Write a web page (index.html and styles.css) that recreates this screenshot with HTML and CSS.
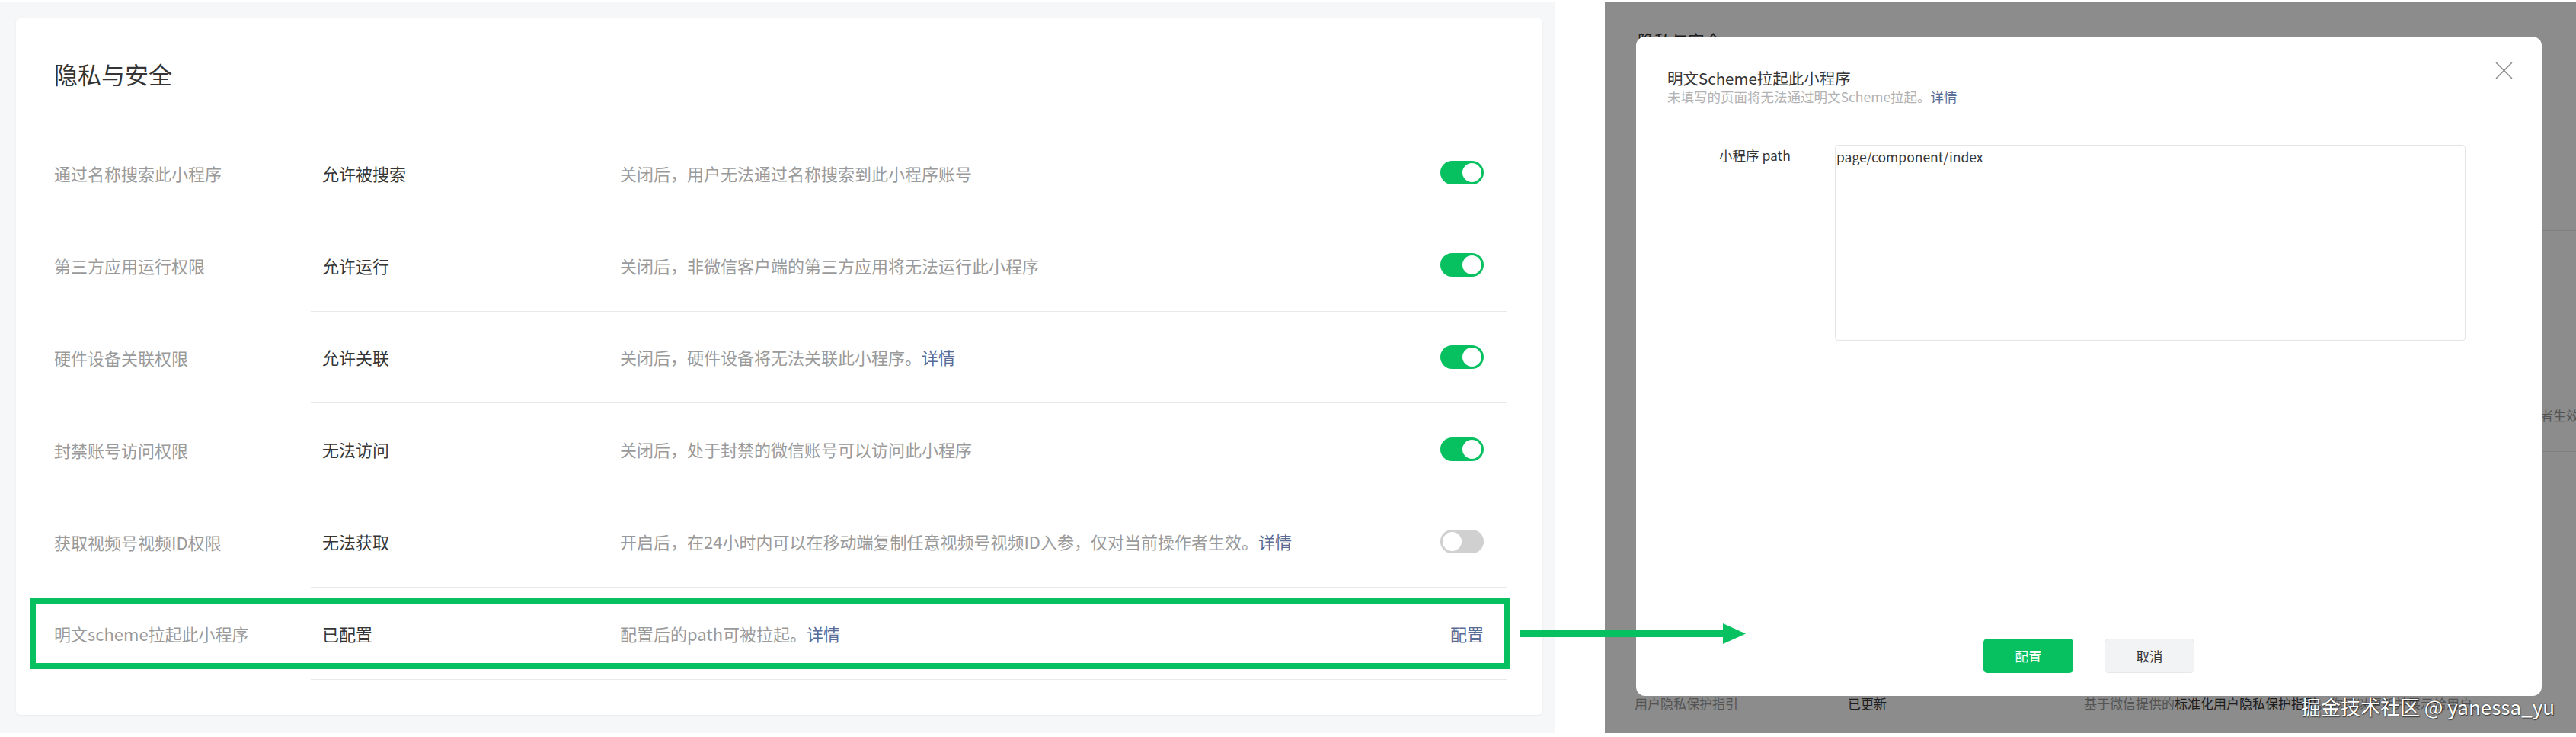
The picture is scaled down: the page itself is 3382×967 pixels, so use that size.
FILE: index.html
```html
<!DOCTYPE html>
<html lang="zh-CN">
<head>
<meta charset="utf-8">
<title>隐私与安全</title>
<link rel="stylesheet" href="styles.css">
</head>
<body>
<div class="canvas">
  <section class="left-shot">
    <div class="card">
      <h2 class="card-title">隐私与安全</h2>
      <div class="setting-list">
        <div class="setting">
          <div class="setting-label">通过名称搜索此小程序</div>
          <div class="setting-body">
            <div class="setting-value">允许被搜索</div>
            <div class="setting-desc">关闭后，用户无法通过名称搜索到此小程序账号</div>
            <div class="switch"><span class="knob"></span></div>
          </div>
        </div>
        <div class="setting">
          <div class="setting-label">第三方应用运行权限</div>
          <div class="setting-body">
            <div class="setting-value">允许运行</div>
            <div class="setting-desc">关闭后，非微信客户端的第三方应用将无法运行此小程序</div>
            <div class="switch"><span class="knob"></span></div>
          </div>
        </div>
        <div class="setting">
          <div class="setting-label">硬件设备关联权限</div>
          <div class="setting-body">
            <div class="setting-value">允许关联</div>
            <div class="setting-desc">关闭后，硬件设备将无法关联此小程序。<span class="link">详情</span></div>
            <div class="switch"><span class="knob"></span></div>
          </div>
        </div>
        <div class="setting">
          <div class="setting-label">封禁账号访问权限</div>
          <div class="setting-body">
            <div class="setting-value">无法访问</div>
            <div class="setting-desc">关闭后，处于封禁的微信账号可以访问此小程序</div>
            <div class="switch"><span class="knob"></span></div>
          </div>
        </div>
        <div class="setting">
          <div class="setting-label">获取视频号视频ID权限</div>
          <div class="setting-body">
            <div class="setting-value">无法获取</div>
            <div class="setting-desc">开启后，在24小时内可以在移动端复制任意视频号视频ID入参，仅对当前操作者生效。<span class="link">详情</span></div>
            <div class="switch off"><span class="knob"></span></div>
          </div>
        </div>
        <div class="setting">
          <div class="setting-label">明文scheme拉起此小程序</div>
          <div class="setting-body">
            <div class="setting-value">已配置</div>
            <div class="setting-desc">配置后的path可被拉起。<span class="link">详情</span></div>
            <div class="setting-action link">配置</div>
          </div>
          <div class="highlight"></div>
        </div>
      </div>
    </div>
  </section>

  <section class="right-shot">
    <div class="behind">
      <div class="bh-head"><span class="bh-title">隐私与安全</span></div>
      <div class="bh-row bh-r1"></div>
      <div class="bh-row bh-r2"></div>
      <div class="bh-row bh-r3"><span class="bh-edge">仅对当前操作者生效</span></div>
      <div class="bh-row bh-r4"></div>
      <div class="bh-last">
        <div class="bh-label">用户隐私保护指引</div>
        <div class="bh-value">已更新</div>
        <div class="bh-desc">基于微信提供的<span class="bh-link">标准化用户隐私保护指引</span>，你可以更新并展示给用户。</div>
      </div>
    </div>
    <div class="mask"></div>
    <div class="modal">
      <h3 class="modal-title">明文Scheme拉起此小程序</h3>
      <div class="modal-sub">未填写的页面将无法通过明文Scheme拉起。<span class="link">详情</span></div>
      <svg class="close" viewBox="0 0 23 23" width="23" height="23" aria-hidden="true">
        <path d="M1 1 L22 22 M22 1 L1 22" stroke="#8c8c8c" stroke-width="1.6" fill="none"/>
      </svg>
      <div class="form-row">
        <div class="form-label">小程序 path</div>
        <div class="textarea">page/component/index</div>
      </div>
      <div class="modal-footer">
        <div class="btn btn-primary">配置</div>
        <div class="btn btn-default">取消</div>
      </div>
    </div>
    <div class="watermark">掘金技术社区 @ yanessa_yu</div>
  </section>

  <svg class="arrow" width="297" height="28" viewBox="0 0 297 28" aria-hidden="true">
    <rect x="0" y="9" width="270" height="9" fill="#07c160"/>
    <polygon points="267,0 297,13.5 267,27" fill="#07c160"/>
  </svg>
</div>
</body>
</html>
```

FILE: styles.css
```css
* { box-sizing: border-box; }
html, body { margin: 0; padding: 0; }
body {
  width: 3382px;
  height: 967px;
  overflow: hidden;
  background: #ffffff;
  font-family: "Noto Sans CJK SC", "Noto Sans", sans-serif;
  color: #353535;
}
.canvas {
  position: relative;
  display: flex;
  align-items: flex-start;
  width: 3382px;
  height: 967px;
  padding-top: 2px;
}

/* ---------- left screenshot ---------- */
.left-shot {
  width: 2041px;
  height: 960px;
  flex: none;
  background: #f6f7f9;
  padding: 22px 0 0 21px;
}
.card {
  width: 2004px;
  height: 914px;
  background: #ffffff;
  border-radius: 6px;
  box-shadow: 0 1px 3px rgba(0, 0, 0, 0.06);
  padding: 51px 46px 0 50px;
}
.card-title {
  margin: 0;
  font-size: 31px;
  line-height: 44px;
  font-weight: 400;
  color: #353535;
}
.setting-list { margin-top: 48px; }
.setting {
  position: relative;
  display: flex;
  height: 120.8px;
  font-size: 22px;
  line-height: 30px;
}
.setting-label {
  width: 337px;
  flex: none;
  display: flex;
  align-items: center;
  color: #9a9a9a;
}
.setting-body {
  flex: 1;
  display: flex;
  align-items: center;
  border-bottom: 1px solid #e8e8e8;
  padding: 0 31px 0 15px;
}
.setting-value {
  width: 391px;
  flex: none;
  color: #353535;
}
.setting-desc {
  flex: 1;
  color: #9a9a9a;
}
.link { color: #576b95; }
.setting-action { flex: none; }

.switch {
  flex: none;
  width: 57px;
  height: 31px;
  border-radius: 16px;
  background: #07c160;
  display: flex;
  align-items: center;
  justify-content: flex-end;
  padding: 0 3px;
}
.switch .knob {
  width: 25px;
  height: 25px;
  border-radius: 50%;
  background: #ffffff;
}
.switch.off {
  background: #d0d0d0;
  justify-content: flex-start;
}
.highlight {
  position: absolute;
  left: -32px;
  top: 13.8px;
  width: 1944px;
  height: 93px;
  border: 8px solid #07c160;
  pointer-events: none;
}

/* ---------- arrow annotation ---------- */
.arrow {
  position: absolute;
  left: 1995px;
  top: 818px;
  z-index: 10;
}

/* ---------- right screenshot ---------- */
.right-shot {
  position: relative;
  flex: none;
  margin-left: 66px;
  width: 1275px;
  height: 960px;
  overflow: hidden;
  background: #ffffff;
}
.behind {
  height: 100%;
  padding-left: 60px;
  font-size: 17px;
  line-height: 24px;
  color: #9a9a9a;
}
.bh-head {
  height: 207px;
  margin-left: -17px;
  padding-top: 36px;
  border-bottom: 1px solid #e8e8e8;
}
.bh-title {
  font-size: 22px;
  line-height: 28px;
  color: #353535;
}
.bh-row { border-bottom: 1px solid #e8e8e8; }
.bh-r1 { height: 94px; }
.bh-r2 { height: 95px; }
.bh-r3 {
  height: 195px;
  display: flex;
  justify-content: flex-end;
  align-items: flex-start;
  padding-top: 135px;
}
.bh-edge { margin-right: -4px; white-space: nowrap; }
.bh-r4 { height: 133px; margin-left: -60px; }
.bh-last {
  display: flex;
  margin-left: -21px;
  padding-top: 185px;
  white-space: nowrap;
}
.bh-label { width: 280px; flex: none; }
.bh-value { width: 310px; flex: none; color: #353535; }
.bh-desc { flex: 1; }
.bh-link { color: #353535; }

.mask {
  position: absolute;
  inset: 0;
  background: rgba(0, 0, 0, 0.45);
}
.modal {
  position: absolute;
  left: 41px;
  top: 46px;
  width: 1189px;
  height: 865px;
  background: #ffffff;
  border-radius: 12px;
  display: flex;
  flex-direction: column;
  padding: 41px 41px 30px 41px;
}
.modal-title {
  margin: 0;
  font-size: 20.5px;
  line-height: 26px;
  font-weight: 400;
  color: #353535;
}
.modal-sub {
  font-size: 17.5px;
  line-height: 24px;
  color: #b2b2b2;
}
.close {
  position: absolute;
  right: 38px;
  top: 33px;
}
.form-row {
  display: flex;
  align-items: flex-start;
  margin-top: 51px;
  padding-left: 68px;
}
.form-label {
  width: 152px;
  flex: none;
  font-size: 17.5px;
  line-height: 28px;
  color: #353535;
}
.textarea {
  width: 828px;
  height: 257px;
  border: 1px solid #e5e5e5;
  border-radius: 4px;
  padding: 3px 1px;
  font-size: 17.5px;
  line-height: 24px;
  color: #353535;
}
.modal-footer {
  margin-top: auto;
  display: flex;
  justify-content: center;
  gap: 41px;
}
.btn {
  width: 118px;
  height: 45px;
  border-radius: 5px;
  font-size: 17.5px;
  display: flex;
  align-items: center;
  justify-content: center;
}
.btn-primary {
  background: #07c160;
  color: #ffffff;
}
.btn-default {
  background: #f2f3f5;
  color: #353535;
  border: 1px solid #e6e7ea;
}
.watermark {
  position: absolute;
  right: 28px;
  bottom: 20px;
  font-size: 26px;
  line-height: 30px;
  color: #ffffff;
  white-space: nowrap;
  text-shadow: 0 0 2px rgba(0, 0, 0, 0.6), 1px 1px 1px rgba(0, 0, 0, 0.5);
}
```
